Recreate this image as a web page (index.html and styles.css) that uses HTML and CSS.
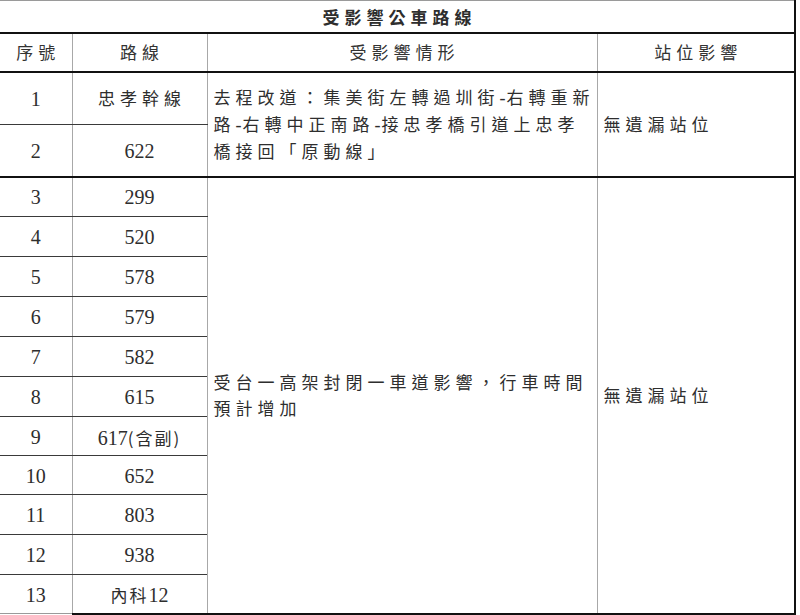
FILE: index.html
```html
<!DOCTYPE html>
<html lang="zh-Hant">
<head>
<meta charset="utf-8">
<title>受影響公車路線</title>
<link rel="stylesheet" href="styles.css">
</head>
<body>
<table class="routes">
  <colgroup>
    <col class="c-no">
    <col class="c-route">
    <col class="c-desc">
    <col class="c-stop">
  </colgroup>
  <tr class="r-title">
    <th colspan="4" class="title end">受影響公車路線</th>
  </tr>
  <tr class="r-head">
    <th class="zh ctr">序號</th>
    <th class="zh ctr">路線</th>
    <th class="zh ctr">受影響情形</th>
    <th class="zh ctr end">站位影響</th>
  </tr>
  <tr class="r-a">
    <td class="num">1</td>
    <td class="zh ctr">忠孝幹線</td>
    <td class="zh desc thick" rowspan="2"><span class="ln">去程改道：集美街左轉過圳街<span class="hy">-</span>右轉重新</span><span class="ln">路<span class="hy">-</span>右轉中正南路<span class="hy">-</span>接忠孝橋引道上忠孝</span><span class="ln">橋接回「原動線」</span></td>
    <td class="zh stop thick end" rowspan="2">無遺漏站位</td>
  </tr>
  <tr class="r-b">
    <td class="num thick">2</td>
    <td class="num thick">622</td>
  </tr>
  <tr class="r h40">
    <td class="num">3</td>
    <td class="num">299</td>
    <td class="zh desc thick" rowspan="11"><span class="ln">受台一高架封閉一車道影響，行車時間</span><span class="ln">預計增加</span></td>
    <td class="zh stop thick end" rowspan="11">無遺漏站位</td>
  </tr>
  <tr class="r h40"><td class="num">4</td><td class="num">520</td></tr>
  <tr class="r h40"><td class="num">5</td><td class="num">578</td></tr>
  <tr class="r h40"><td class="num">6</td><td class="num">579</td></tr>
  <tr class="r h40"><td class="num">7</td><td class="num">582</td></tr>
  <tr class="r h40"><td class="num">8</td><td class="num">615</td></tr>
  <tr class="r h39"><td class="num">9</td><td class="num">617<span class="zh-s">(含副)</span></td></tr>
  <tr class="r h39"><td class="num">10</td><td class="num">652</td></tr>
  <tr class="r h40"><td class="num">11</td><td class="num">803</td></tr>
  <tr class="r h40"><td class="num">12</td><td class="num">938</td></tr>
  <tr class="r h39"><td class="num light">13</td><td class="num thick"><span class="zh-s">內科</span>12</td></tr>
</table>
</body>
</html>
```

FILE: styles.css
```css
html, body {
  margin: 0;
  padding: 0;
  background: #ffffff;
}

.routes {
  border-collapse: collapse;
  table-layout: fixed;
  width: 795px;
  color: #2e2e2e;
  font-family: "Noto Sans CJK TC", "Liberation Serif", serif;
}

.c-no { width: 72px; }
.c-route { width: 135px; }
.c-desc { width: 390px; }
.c-stop { width: 198px; }

.routes th,
.routes td {
  padding: 0;
  border-left: 1px solid #a8a8a8;
  border-right: 1px solid #a8a8a8;
  border-top: 1px solid #3a3a3a;
  border-bottom: 1px solid #3a3a3a;
  font-weight: normal;
  vertical-align: middle;
}

.routes tr > :first-child {
  border-left: none;
}

.routes .end {
  border-right: 2px solid #111111;
}

.r-title { height: 32px; }
.r-head { height: 39px; }
.r-a { height: 53px; }
.r-b { height: 52px; }
.h40 { height: 40px; }
.h39 { height: 39px; }

.routes .title {
  border-top: 1px solid #9a9a9a;
  border-bottom: 2px solid #111111;
  font-weight: bold;
  font-size: 17px;
  letter-spacing: 5px;
  padding-left: 5px;
  text-align: center;
}

.routes .r-head th {
  border-bottom: 2px solid #111111;
  color: #333333;
}

.routes .thick {
  border-bottom: 2px solid #111111;
}

.routes .light {
  border-bottom: 1px solid #9a9a9a;
}

.zh {
  font-family: "Noto Sans CJK TC", sans-serif;
  font-size: 17px;
  letter-spacing: 5px;
  line-height: 26px;
}

.routes .ctr {
  text-align: center;
  padding-left: 5px;
}

.routes .num {
  font-family: "Liberation Serif", "Noto Sans CJK TC", serif;
  font-size: 20px;
  text-align: center;
  color: #2e2e2e;
  padding-top: 2px;
}

.zh-s {
  font-family: "Noto Sans CJK TC", sans-serif;
  font-size: 17px;
  letter-spacing: 2px;
}

.routes .desc {
  text-align: left;
  padding: 0 0 0 6px;
}

.ln {
  display: block;
  white-space: nowrap;
}

.hy {
  font-family: "Liberation Serif", serif;
  font-size: 18px;
  letter-spacing: 1px;
}

.routes .stop {
  text-align: left;
  padding-left: 6px;
}
```
